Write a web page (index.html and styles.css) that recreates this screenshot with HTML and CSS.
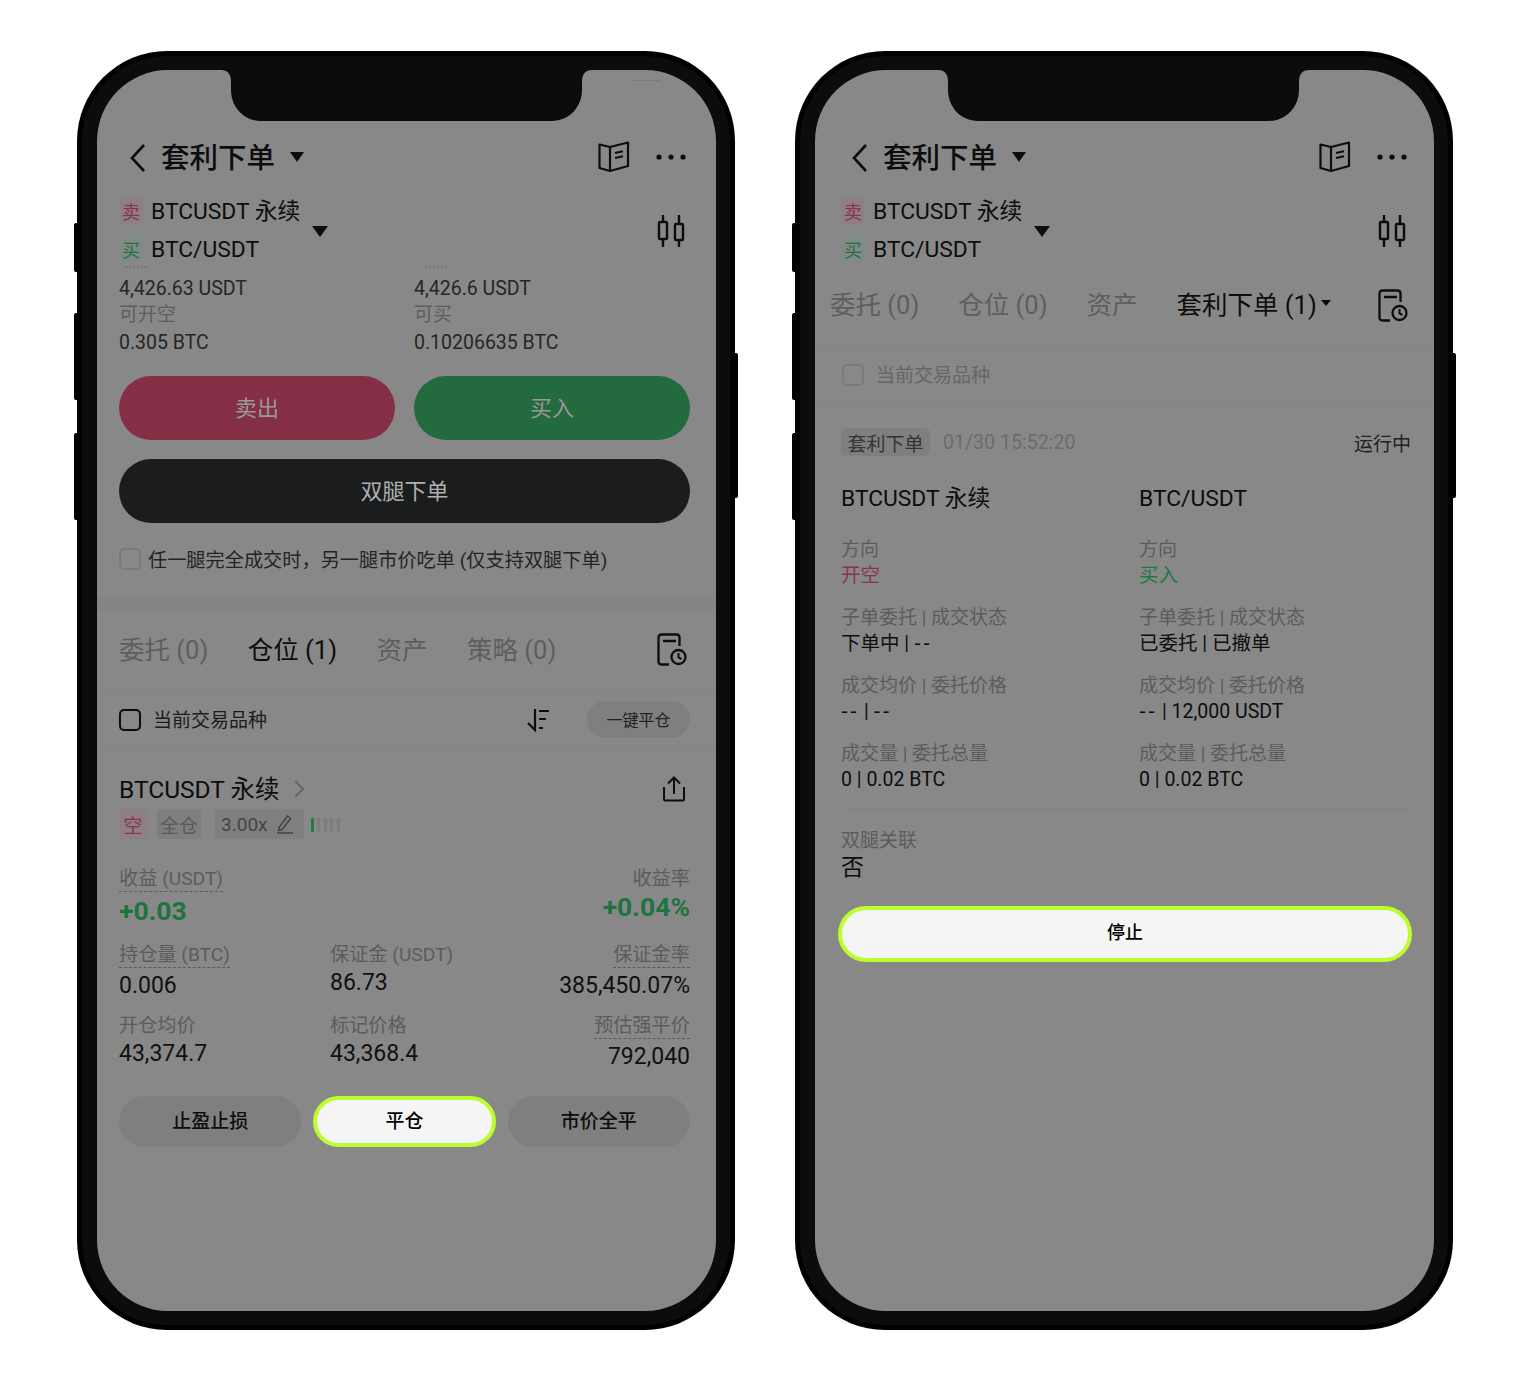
FILE: index.html
```html
<!DOCTYPE html>
<html lang="zh-CN">
<head>
  <meta charset="UTF-8">
  <meta name="viewport" content="width=device-width, initial-scale=1.0">
  <title>套利下单</title>
  <link rel="stylesheet" href="styles.css">
</head>
<body>
  <svg class="sprites" aria-hidden="true">
    <symbol id="i-back" viewBox="0 0 18 30"><path d="M15 2 3 15l12 13" fill="none" stroke="currentColor" stroke-width="2.6"/></symbol>
    <symbol id="i-book" viewBox="0 0 32 32"><path d="M1.500 3.500 12 6 30 1.500V25l-18 5-10.500-3zM12 6v24M17 12l8-1.800M17 17l8-1.800" fill="none" stroke="currentColor" stroke-width="2.200" stroke-linejoin="round"/></symbol>
    <symbol id="i-dots" viewBox="0 0 30 6"><circle cx="3" cy="3" r="2.600" fill="currentColor"/><circle cx="15" cy="3" r="2.600" fill="currentColor"/><circle cx="27" cy="3" r="2.600" fill="currentColor"/></symbol>
    <symbol id="i-candle" viewBox="0 0 28 34"><path d="M6 1v7M6 25v8M22 1v9M22 26v7" fill="none" stroke="currentColor" stroke-width="2.400"/><rect x="2" y="8" width="8" height="17" rx="1" fill="none" stroke="currentColor" stroke-width="2.400"/><rect x="18" y="10" width="8" height="16" rx="1" fill="none" stroke="currentColor" stroke-width="2.400"/></symbol>
    <symbol id="i-orders" viewBox="0 0 30 34"><path d="M12 31.500H4.500q-3 0-3-3v-24q0-3 3-3h15q3 0 3 3V13M6 8h13" fill="none" stroke="currentColor" stroke-width="2.300"/><circle cx="21.500" cy="24" r="7" fill="none" stroke="currentColor" stroke-width="2.300"/><path d="M21.500 20v4.500l3 1.500" fill="none" stroke="currentColor" stroke-width="2"/></symbol>
    <symbol id="i-sort" viewBox="0 0 24 24"><path d="M9 1v21L2 15M13 3h10M13 11h7M13 20h4" fill="none" stroke="currentColor" stroke-width="2.200"/></symbol>
    <symbol id="i-share" viewBox="0 0 24 26"><path d="M2 11v12q0 1.500 1.500 1.500h17q1.500 0 1.500-1.500V11M12 2v16M6 7.500 12 1.500l6 6" fill="none" stroke="currentColor" stroke-width="2"/></symbol>
    <symbol id="i-pencil" viewBox="0 0 18 20"><path d="M3 13.500 11.500 2l3 2.500L6 15.500l-3.500 1zM1 19h16" fill="none" stroke="currentColor" stroke-width="1.500"/></symbol>
    <symbol id="i-notch" viewBox="0 0 371 51"><path d="M0 0q10 0 10 12v8c0 17 13 31 30 31h291c17 0 30-14 30-31v-8q0-12 10-12z" fill="#0c0c0c"/></symbol>
  </svg>

  <div class="page">

    <div class="phone">
      <span class="side side-a"></span><span class="side side-b"></span><span class="side side-c"></span><span class="side side-r"></span>
      <div class="bezel">
        <div class="screen screen-left">
          <svg class="notch"><use href="#i-notch"/></svg>
          <span class="glint"></span>

          <div class="topbar">
            <svg class="ico-back"><use href="#i-back"/></svg>
            <h1 class="title">套利下单</h1>
            <span class="caret caret-title"></span>
            <svg class="ico-book"><use href="#i-book"/></svg>
            <svg class="ico-dots"><use href="#i-dots"/></svg>
          </div>

          <div class="legs">
            <div class="leg-list">
              <div class="leg"><span class="tag tag-sell">卖</span>BTCUSDT 永续</div>
              <div class="leg"><span class="tag tag-buy">买</span>BTC/USDT</div>
            </div>
            <span class="caret caret-leg"></span>
            <svg class="ico-candle"><use href="#i-candle"/></svg>
          </div>

          <div class="quotes">
            <div>
              <span class="q-clip"></span>
              <p class="q-val">4,426.63 USDT</p>
              <p class="q-lbl">可开空</p>
              <p class="q-val q-last">0.305 BTC</p>
            </div>
            <div>
              <span class="q-clip q-clip-b"></span>
              <p class="q-val">4,426.6 USDT</p>
              <p class="q-lbl">可买</p>
              <p class="q-val q-last">0.10206635 BTC</p>
            </div>
          </div>

          <div class="trade-btns">
            <button class="btn-sell">卖出</button>
            <button class="btn-buy">买入</button>
          </div>
          <button class="btn-both">双腿下单</button>

          <div class="agree">
            <span class="check check-soft"></span>
            <span class="agree-text">任一腿完全成交时，另一腿市价吃单 (仅支持双腿下单)</span>
          </div>

          <div class="band"></div>

          <div class="tabs tabs-left">
            <span class="tab">委托 (0)</span>
            <span class="tab tab-on">仓位 (1)</span>
            <span class="tab">资产</span>
            <span class="tab">策略 (0)</span>
            <svg class="ico-orders"><use href="#i-orders"/></svg>
          </div>
          <div class="rule"></div>

          <div class="filter">
            <span class="check"></span>
            <span class="filter-text">当前交易品种</span>
            <svg class="ico-sort"><use href="#i-sort"/></svg>
            <button class="pill">一键平仓</button>
          </div>
          <div class="rule"></div>

          <div class="pos-head">
            <span class="pos-name">BTCUSDT 永续</span>
            <span class="chev"></span>
            <svg class="ico-share"><use href="#i-share"/></svg>
          </div>
          <div class="pos-tags">
            <span class="chip chip-short">空</span>
            <span class="chip">全仓</span>
            <span class="chip chip-lev">3.00x<svg class="ico-pencil"><use href="#i-pencil"/></svg></span>
            <span class="lev-bars"><i class="on"></i><i></i><i></i><i></i><i></i></span>
          </div>

          <div class="stats stats-hero">
            <div>
              <p class="lbl"><span class="dash">收益 (USDT)</span></p>
              <p class="profit">+0.03</p>
            </div>
            <div class="right">
              <p class="lbl">收益率</p>
              <p class="profit profit-rate">+0.04%</p>
            </div>
          </div>

          <div class="stats stats-3 stats-b">
            <div>
              <p class="lbl"><span class="dash">持仓量 (BTC)</span></p>
              <p class="val">0.006</p>
            </div>
            <div>
              <p class="lbl">保证金 (USDT)</p>
              <p class="val val-up">86.73</p>
            </div>
            <div class="right">
              <p class="lbl"><span class="dash">保证金率</span></p>
              <p class="val">385,450.07%</p>
            </div>
          </div>

          <div class="stats stats-3 stats-c">
            <div>
              <p class="lbl">开仓均价</p>
              <p class="val val-up">43,374.7</p>
            </div>
            <div>
              <p class="lbl">标记价格</p>
              <p class="val val-up">43,368.4</p>
            </div>
            <div class="right">
              <p class="lbl"><span class="dash">预估强平价</span></p>
              <p class="val">792,040</p>
            </div>
          </div>

          <div class="pos-actions">
            <button class="act">止盈止损</button>
            <button class="act act-hot">平仓</button>
            <button class="act">市价全平</button>
          </div>
        </div>
      </div>
    </div>

    <div class="phone">
      <span class="side side-a"></span><span class="side side-b"></span><span class="side side-c"></span><span class="side side-r"></span>
      <div class="bezel">
        <div class="screen screen-right">
          <svg class="notch"><use href="#i-notch"/></svg>

          <div class="topbar">
            <svg class="ico-back"><use href="#i-back"/></svg>
            <h1 class="title">套利下单</h1>
            <span class="caret caret-title"></span>
            <svg class="ico-book"><use href="#i-book"/></svg>
            <svg class="ico-dots"><use href="#i-dots"/></svg>
          </div>

          <div class="legs">
            <div class="leg-list">
              <div class="leg"><span class="tag tag-sell">卖</span>BTCUSDT 永续</div>
              <div class="leg"><span class="tag tag-buy">买</span>BTC/USDT</div>
            </div>
            <span class="caret caret-leg"></span>
            <svg class="ico-candle"><use href="#i-candle"/></svg>
          </div>

          <div class="tabs tabs-right">
            <span class="tab">委托 (0)</span>
            <span class="tab">仓位 (0)</span>
            <span class="tab">资产</span>
            <span class="tab tab-on">套利下单 (1)<span class="caret caret-tab"></span></span>
            <svg class="ico-orders"><use href="#i-orders"/></svg>
          </div>
          <div class="rule"></div>

          <div class="filter filter-off">
            <span class="check check-soft"></span>
            <span class="filter-text">当前交易品种</span>
          </div>
          <div class="rule"></div>

          <div class="order-meta">
            <span class="meta-tag">套利下单</span>
            <span class="meta-time">01/30 15:52:20</span>
            <span class="meta-state">运行中</span>
          </div>

          <div class="order-grid">
            <div class="col">
              <h2 class="leg-name">BTCUSDT 永续</h2>
              <p class="o-lbl o-first">方向</p>
              <p class="o-val red">开空</p>
              <p class="o-lbl">子单委托 | 成交状态</p>
              <p class="o-val">下单中 | <span class="dd">--</span></p>
              <p class="o-lbl">成交均价 | 委托价格</p>
              <p class="o-val"><span class="dd">--</span> | <span class="dd">--</span></p>
              <p class="o-lbl">成交量 | 委托总量</p>
              <p class="o-val">0 | 0.02 BTC</p>
            </div>
            <div class="col">
              <h2 class="leg-name">BTC/USDT</h2>
              <p class="o-lbl o-first">方向</p>
              <p class="o-val green">买入</p>
              <p class="o-lbl">子单委托 | 成交状态</p>
              <p class="o-val">已委托 | 已撤单</p>
              <p class="o-lbl">成交均价 | 委托价格</p>
              <p class="o-val"><span class="dd">--</span> | 12,000 USDT</p>
              <p class="o-lbl">成交量 | 委托总量</p>
              <p class="o-val">0 | 0.02 BTC</p>
            </div>
          </div>

          <div class="rule-in"></div>
          <p class="o-lbl link-lbl">双腿关联</p>
          <p class="link-val">否</p>

          <button class="btn-stop">停止</button>
        </div>
      </div>
    </div>

  </div>
</body>
</html>
```

FILE: styles.css
```css
html, body{
  margin: 0;
  padding: 0;
  background: #fff;
}
body{
  font-family: Roboto, "Noto Sans CJK SC", sans-serif;
  color: #0d0d0d;
}
p, h1, h2{
  margin: 0;
  font-weight: 400;
}
button{
  font-family: inherit;
  border: 0;
  padding: 0;
}
.sprites{
  display: none;
}
svg{
  display: block;
  flex: none;
}

.page{
  display: flex;
  gap: 60px;
  padding: 51px 0 52px 77px;
}
.phone{
  position: relative;
  width: 658px;
  height: 1279px;
  box-sizing: border-box;
  padding: 5px;
  background: #000;
  border-radius: 90px;
}
.side{
  position: absolute;
  width: 6px;
  background: #000;
  border-radius: 2px;
}
.side-a{ left: -3px; top: 172px; height: 49px; }
.side-b{ left: -3px; top: 262px; height: 87px; }
.side-c{ left: -3px; top: 382px; height: 87px; }
.side-r{ right: -3px; top: 302px; height: 145px; }
.bezel{
  height: 100%;
  box-sizing: border-box;
  padding: 14px 14px 14px 15px;
  background: #0c0c0c;
  border-radius: 85px;
}
.screen{
  position: relative;
  height: 100%;
  box-sizing: border-box;
  padding: 60px var(--pr) 0 var(--pl);
  background: #888;
  border-radius: 71px;
  overflow: hidden;
}
.screen-left{
  --pl: 22px;
  --pr: 26px;
}
.screen-right{
  --pl: 26px;
  --pr: 23px;
}
.notch{
  position: absolute;
  left: 124px;
  top: 0;
  width: 371px;
  height: 51px;
}
.screen-right .notch{
  left: 123px;
}
.glint{
  position: absolute;
  left: 536px;
  top: 10px;
  width: 27px;
  height: 1px;
  background: #7c7c7c;
}

/* top bar */
.topbar{
  display: flex;
  align-items: center;
  height: 54px;
  padding: 0 4px 0 10px;
}
.ico-back{
  width: 18px;
  height: 30px;
  margin-top: 2px;
}
.title{
  margin: 4px 0 0 14px;
  font-size: 28.5px;
  font-weight: 500;
  line-height: 40px;
}
.caret{
  display: inline-block;
  width: 0;
  height: 0;
  border-style: solid;
  border-color: #0d0d0d transparent transparent;
}
.caret-title{
  margin-left: 15px;
  border-width: 10px 7.5px 0;
}
.ico-book{
  width: 32px;
  height: 32px;
  margin-left: auto;
}
.ico-dots{
  width: 30px;
  height: 6px;
  margin-left: 26px;
}

/* pair rows */
.legs{
  display: flex;
  align-items: center;
  margin-top: 8px;
  height: 76px;
}
.leg{
  display: flex;
  align-items: center;
  height: 38px;
  font-size: 22.8px;
}
.leg:first-child{
  height: 34px;
  margin-bottom: 4px;
}
.leg:first-child .tag{
  margin-top: 4px;
}
.tag{
  display: flex;
  align-items: center;
  justify-content: center;
  width: 24px;
  height: 26px;
  margin-right: 8px;
  font-size: 18px;
  border-radius: 3px;
}
.tag-sell{
  color: #8a3350;
  background: #8e7f84;
}
.tag-buy{
  color: #256f42;
  background: #7f8b84;
}
.caret-leg{
  margin: 2px 0 0 12px;
  border-width: 11px 8px 0;
}
.ico-candle{
  width: 28px;
  height: 34px;
  margin: 2px 5px 0 auto;
}

/* prices */
.quotes{
  display: grid;
  grid-template-columns: 295px 1fr;
}
.q-clip{
  display: block;
  box-sizing: border-box;
  width: 22px;
  height: 2px;
  margin: -2px 0 8px 6px;
  border-top: 2px dotted #777;
}
.q-clip-b{
  margin-left: 11px;
}
.q-val{
  font-size: 19.5px;
  line-height: 26px;
  color: #262626;
}
.q-lbl{
  margin-top: 1px;
  font-size: 19px;
  line-height: 24px;
  color: #5e5e5e;
}
.q-last{
  margin-top: 3px;
}
.trade-btns{
  display: flex;
  gap: 19px;
  margin-top: 20px;
}
.btn-sell, .btn-buy, .btn-both{
  display: block;
  height: 64px;
  padding-bottom: 4px;
  font-size: 22px;
  border-radius: 32px;
}
.btn-sell, .btn-buy{
  flex: 1;
  color: #999;
}
.btn-sell{
  background: #842f45;
}
.btn-buy{
  background: #236a3e;
}
.btn-both{
  width: 100%;
  margin-top: 19px;
  color: #b0b0b0;
  background: #1a1c1e;
}
.agree{
  display: flex;
  align-items: center;
  gap: 7px;
  height: 24px;
  margin-top: 24px;
  font-size: 19.2px;
  color: #242424;
}
.check{
  display: block;
  flex: none;
  box-sizing: border-box;
  width: 22px;
  height: 22px;
  border: 2.5px solid #0d0d0d;
  border-radius: 5px;
}
.check-soft{
  border: 2px solid #7b7b7b;
}
.band{
  height: 12px;
  margin: 27px calc(var(--pr) * -1) 0 calc(var(--pl) * -1);
  background: #848484;
}

/* tabs */
.tabs{
  display: flex;
  align-items: center;
  box-sizing: border-box;
}
.tabs-left{
  gap: 39.5px;
  height: 80px;
  padding-bottom: 6px;
}
.tabs-right{
  gap: 39px;
  height: 77px;
  margin-left: -11px;
  padding-bottom: 8px;
}
.tab{
  font-size: 25.5px;
  color: #5e5e5e;
  display: flex;
  align-items: center;
}
.tab-on{
  color: #0d0d0d;
}
.caret-tab{
  margin-left: 4px;
  border-width: 6px 5px 0;
}
.ico-orders{
  width: 30px;
  height: 34px;
  margin: 6px 3px 0 auto;
}
.rule{
  height: 1px;
  margin: 0 calc(var(--pr) * -1) 0 calc(var(--pl) * -1);
  background: #838383;
}
.filter{
  display: flex;
  align-items: center;
  height: 57px;
  font-size: 19px;
}
.filter-text{
  margin-left: 12px;
  padding-bottom: 3px;
  color: #1c1c1c;
}
.filter-off{
  margin-left: 1px;
}
.filter-off .filter-text{
  color: #666;
}
.ico-sort{
  width: 24px;
  height: 24px;
  margin-left: auto;
  margin-right: 37px;
}
.pill{
  width: 103px;
  height: 37px;
  padding-bottom: 2px;
  font-size: 16px;
  color: #222;
  background: #7f7f7f;
  border-radius: 19px;
}

/* position card */
.pos-head{
  display: flex;
  align-items: center;
  height: 36px;
  margin-top: 22px;
}
.pos-name{
  padding-bottom: 4px;
  font-size: 24.5px;
}
.chev{
  width: 12px;
  height: 12px;
  box-sizing: border-box;
  margin: 0 0 0 10px;
  border-top: 2px solid #666;
  border-right: 2px solid #666;
  transform: rotate(45deg);
}
.ico-share{
  width: 24px;
  height: 26px;
  margin-left: auto;
  margin-right: 4px;
}
.pos-tags{
  display: flex;
  align-items: center;
  gap: 10px;
  height: 32px;
  margin-top: 1px;
}
.chip{
  display: flex;
  align-items: center;
  justify-content: center;
  height: 30px;
  padding: 0 3px;
  font-size: 19px;
  color: #5a5a5a;
  background: #7f7f7f;
  border-radius: 3px;
}
.chip-short{
  padding: 0 4.5px;
  color: #8a3350;
  background: #8e7f84;
}
.chip-lev{
  gap: 8px;
  margin-left: 4px;
  padding: 0 10px 0 6px;
  color: #444;
}
.ico-pencil{
  width: 18px;
  height: 20px;
}
.lev-bars{
  display: flex;
  gap: 3.5px;
  margin: 2px 0 0 -3px;
}
.lev-bars i{
  display: block;
  width: 3px;
  height: 14px;
  background: #7d7d7d;
}
.lev-bars i.on{
  background: #27794a;
}

/* stats */
.stats{
  display: grid;
  grid-template-columns: 1fr 1fr;
}
.stats-3{
  grid-template-columns: 211px 1fr 1fr;
}
.stats-hero{
  margin-top: 27px;
}
.stats-b{
  margin-top: 18px;
}
.stats-c{
  margin-top: 15px;
}
.right{
  text-align: right;
}
.lbl{
  font-size: 19.2px;
  line-height: 24px;
  height: 25px;
  color: #5c5c5c;
}
.dash{
  display: inline-block;
  border-bottom: 1px dashed #5c5c5c;
}
.val{
  margin-top: 5px;
  font-size: 23px;
  line-height: 26px;
  color: #101010;
}
.val-up{
  margin-top: 2px;
}
.profit{
  margin-top: 5px;
  font-size: 26.5px;
  font-weight: 700;
  line-height: 28px;
  color: #1c7442;
}
.profit-rate{
  margin-top: 1px;
}
.pos-actions{
  display: grid;
  grid-template-columns: repeat(3, 1fr);
  gap: 12px;
  margin-top: 26px;
}
.act{
  height: 51px;
  padding-bottom: 4px;
  font-size: 19px;
  font-weight: 500;
  color: #0d0d0d;
  background: #7f7f7f;
  border-radius: 26px;
}
.act-hot{
  color: #000;
  background: #f5f5f5;
  border: 4px solid #bdfd2c;
}

/* order detail */
.order-meta{
  display: flex;
  align-items: center;
  height: 28px;
  margin-top: 24px;
}
.meta-tag{
  display: flex;
  align-items: center;
  justify-content: center;
  width: 89px;
  height: 28px;
  font-size: 19px;
  color: #333;
  background: #7f7f7f;
  border-radius: 5px;
}
.meta-time{
  margin-left: 13px;
  font-size: 19.6px;
  color: #6c6c6c;
}
.meta-state{
  margin-left: auto;
  font-size: 19px;
  color: #222;
}
.order-grid{
  display: grid;
  grid-template-columns: 298px 1fr;
  margin-top: 29px;
}
.leg-name{
  font-size: 22.8px;
  line-height: 28px;
}
.o-lbl{
  margin-top: 16px;
  font-size: 19px;
  line-height: 26px;
  color: #5c5c5c;
}
.o-first{
  margin-top: 24px;
}
.o-val{
  font-size: 19.5px;
  line-height: 26px;
  color: #0d0d0d;
}
.dd{
  font-family: "DejaVu Sans", sans-serif;
  letter-spacing: 2px;
}
.red{
  color: #8a3350;
}
.green{
  color: #1f7a45;
}
.rule-in{
  height: 1px;
  margin-top: 15px;
  background: #838383;
}
.link-lbl{
  margin-top: 19px;
}
.link-val{
  margin-top: 1px;
  font-size: 23px;
  line-height: 26px;
}
.btn-stop{
  display: block;
  width: 574px;
  height: 56px;
  margin: 25px 0 0 -3px;
  padding-bottom: 6px;
  font-size: 18px;
  font-weight: 500;
  color: #000;
  background: #f5f5f5;
  border: 4px solid #bdfd2c;
  border-radius: 28px;
}
```
